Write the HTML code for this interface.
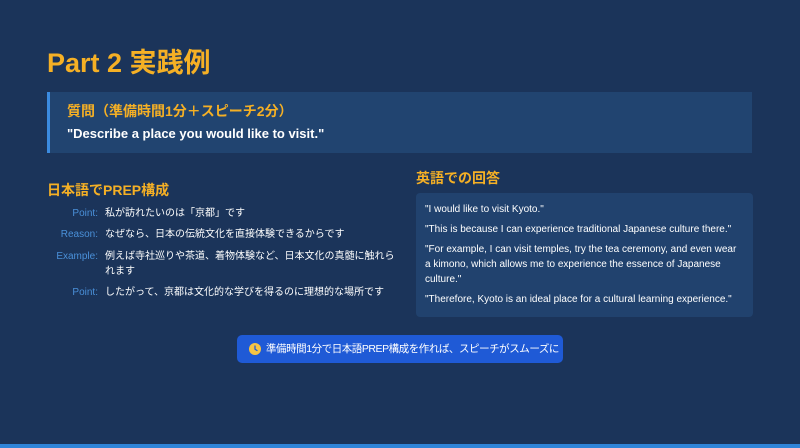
<!DOCTYPE html>
<html><head><meta charset="utf-8"><style>
*{margin:0;padding:0;box-sizing:border-box}
body{width:800px;height:448px;background:#1b345a;font-family:"Liberation Sans","Noto Sans CJK JP",sans-serif;position:relative;overflow:hidden;color:#fff}
.t{position:absolute;left:47px;top:41px;font-size:27px;font-weight:bold;color:#f5b025}
.q{position:absolute;left:47px;top:92px;width:705px;height:61px;background:#214470;border-left:3px solid #3b8be0;padding:9px 0 0 17px}
.q1{font-size:14px;font-weight:bold;color:#f5b025}
.q2{font-size:13px;font-weight:bold;margin-top:5px}
.h{position:absolute;font-size:14px;font-weight:bold;color:#f5b025}
.row{position:absolute;left:47px;width:350px;font-size:10px;line-height:15px;display:flex}
.row .l{width:51px;text-align:right;color:#4a90d9;flex:none;margin-right:7px}
.a{position:absolute;left:416px;top:193px;width:337px;height:124px;background:#21426e;border-radius:4px;padding:9px 9px;font-size:10px;line-height:15px}
.a p{margin-bottom:5px}
.b{position:absolute;left:237px;top:335px;width:326px;height:28px;background:#1f5ad6;border-radius:5px;font-size:10.5px;line-height:28px;padding-left:29px;white-space:nowrap;letter-spacing:-0.45px}
.c{position:absolute;left:12px;top:8px}
.bar{position:absolute;left:0;bottom:0;width:800px;height:4px;background:#2f84d8}
</style></head><body>
<div class="t">Part 2 実践例</div>
<div class="q"><div class="q1">質問（準備時間1分＋スピーチ2分）</div><div class="q2">"Describe a place you would like to visit."</div></div>
<div class="h" style="left:47px;top:180px">日本語でPREP構成</div>
<div class="row" style="top:206px"><span class="l">Point:</span><span>私が訪れたいのは「京都」です</span></div>
<div class="row" style="top:227px"><span class="l">Reason:</span><span>なぜなら、日本の伝統文化を直接体験できるからです</span></div>
<div class="row" style="top:249px"><span class="l">Example:</span><span>例えば寺社巡りや茶道、着物体験など、日本文化の真髄に触れられます</span></div>
<div class="row" style="top:285px"><span class="l">Point:</span><span>したがって、京都は文化的な学びを得るのに理想的な場所です</span></div>
<div class="h" style="left:416px;top:168px">英語での回答</div>
<div class="a">
<p>"I would like to visit Kyoto."</p>
<p>"This is because I can experience traditional Japanese culture there."</p>
<p>"For example, I can visit temples, try the tea ceremony, and even wear a kimono, which allows me to experience the essence of Japanese culture."</p>
<p>"Therefore, Kyoto is an ideal place for a cultural learning experience."</p>
</div>
<div class="b"><svg class="c" width="12" height="12" viewBox="0 0 12 12"><circle cx="6" cy="6" r="6" fill="#f6c443"/><path d="M6 3v3.2l2 1.3" stroke="#1f5ad6" stroke-width="1.3" fill="none" stroke-linecap="round"/></svg>準備時間1分で日本語PREP構成を作れば、スピーチがスムーズに</div>
<div class="bar"></div>
</body></html>
